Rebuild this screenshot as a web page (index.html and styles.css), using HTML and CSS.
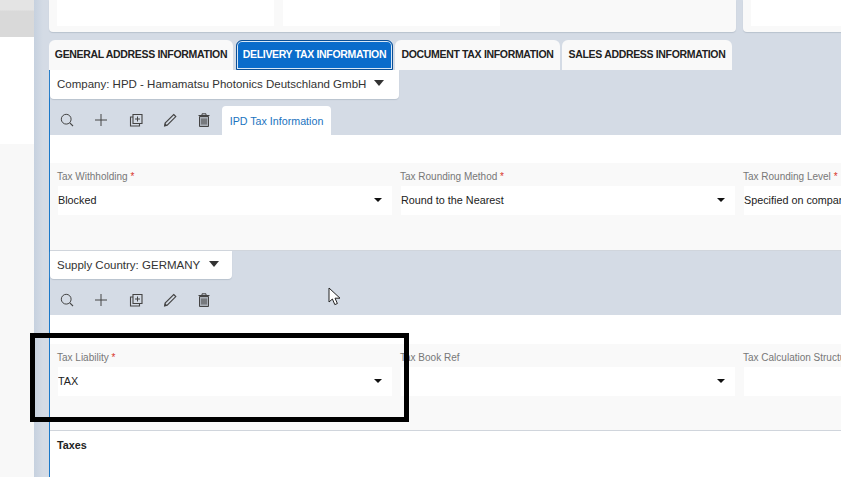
FILE: index.html
```html
<!DOCTYPE html>
<html lang="en">
<head>
<meta charset="utf-8">
<title>Delivery Tax Information</title>
<link rel="stylesheet" href="styles.css">
</head>
<body>
<svg class="defs" width="0" height="0" aria-hidden="true">
  <defs>
    <symbol id="i-search" viewBox="0 0 16 16"><circle cx="7.2" cy="7.2" r="4.9" fill="none" stroke="#444" stroke-width="1"/><path d="M10.8 10.8 14 14" fill="none" stroke="#444" stroke-width="1.1"/></symbol>
    <symbol id="i-plus" viewBox="0 0 16 16"><path d="M8 2v12M2 8h12" fill="none" stroke="#444" stroke-width="1"/></symbol>
    <symbol id="i-copy" viewBox="0 0 16 16"><path d="M5 2.5h9v9H5z" fill="none" stroke="#444" stroke-width="1.1"/><path d="M5 5H2.5v9h9v-2.5" fill="none" stroke="#444" stroke-width="1.1"/><path d="M9.5 4.5v5M7 7h5" fill="none" stroke="#444" stroke-width="1"/></symbol>
    <symbol id="i-edit" viewBox="0 0 16 16"><path d="M11.7 2.5 13.8 4.6 5.2 13.2 2.6 13.9 3.1 11Z" fill="none" stroke="#444" stroke-width="1.1"/><path d="M3.1 11 5.2 13.2 2.3 14Z" fill="#444"/></symbol>
    <symbol id="i-trash" viewBox="0 0 16 16"><path d="M3.5 4.5v10h9v-10Z" fill="#aab0b8" stroke="#444" stroke-width="1"/><path d="M2.5 3.5h11M6 3.2V1.8h4v1.4M6 6.5v6M8 6.5v6M10 6.5v6" fill="none" stroke="#444" stroke-width="1"/></symbol>
  </defs>
</svg>
<div class="page">
  <aside class="side">
    <div class="side-head"></div>
    <div class="side-white"></div>
    <div class="side-rest"></div>
  </aside>
  <div class="rail"></div>
  <main class="main">
    <div class="cards">
      <div class="card card-wide">
        <div class="slot"></div>
        <div class="slot"></div>
      </div>
      <div class="card card-rest">
        <div class="slot slot-grow"></div>
      </div>
    </div>
    <nav class="tabs">
      <div class="tab tab-1">GENERAL ADDRESS INFORMATION</div>
      <div class="tab tab-active">DELIVERY TAX INFORMATION</div>
      <div class="tab tab-3">DOCUMENT TAX INFORMATION</div>
      <div class="tab tab-4">SALES ADDRESS INFORMATION</div>
    </nav>
    <div class="panel">
      <section class="band">
        <div class="drop drop-company">
          <span>Company: HPD - Hamamatsu Photonics Deutschland GmbH</span>
          <i class="caret caret-lg"></i>
        </div>
        <div class="toolbar">
          <svg class="icon"><use href="#i-search"/></svg>
          <svg class="icon"><use href="#i-plus"/></svg>
          <svg class="icon"><use href="#i-copy"/></svg>
          <svg class="icon"><use href="#i-edit"/></svg>
          <svg class="icon"><use href="#i-trash"/></svg>
          <div class="subtab">IPD Tax Information</div>
        </div>
      </section>
      <div class="spacer"></div>
      <section class="form">
        <div class="field">
          <div class="label">Tax Withholding <b>*</b></div>
          <div class="select"><span>Blocked</span><i class="caret"></i></div>
        </div>
        <div class="field">
          <div class="label">Tax Rounding Method <b>*</b></div>
          <div class="select"><span>Round to the Nearest</span><i class="caret"></i></div>
        </div>
        <div class="field">
          <div class="label">Tax Rounding Level <b>*</b></div>
          <div class="select"><span>Specified on company</span><i class="caret"></i></div>
        </div>
      </section>
      <section class="band band-short">
        <div class="drop drop-country">
          <span>Supply Country: GERMANY</span>
          <i class="caret caret-lg"></i>
        </div>
        <div class="toolbar">
          <svg class="icon"><use href="#i-search"/></svg>
          <svg class="icon"><use href="#i-plus"/></svg>
          <svg class="icon"><use href="#i-copy"/></svg>
          <svg class="icon"><use href="#i-edit"/></svg>
          <svg class="icon"><use href="#i-trash"/></svg>
        </div>
      </section>
      <div class="spacer spacer-tall"></div>
      <section class="form form-short">
        <div class="field">
          <div class="label">Tax Liability <b>*</b></div>
          <div class="select"><span>TAX</span><i class="caret"></i></div>
        </div>
        <div class="field">
          <div class="label">Tax Book Ref</div>
          <div class="select"><span></span><i class="caret"></i></div>
        </div>
        <div class="field">
          <div class="label">Tax Calculation Structure</div>
          <div class="select"><span></span></div>
        </div>
      </section>
      <h2 class="taxes">Taxes</h2>
    </div>
  </main>
</div>
<div class="callout"></div>
<svg class="cursor" width="14" height="20" viewBox="0 0 14 20" aria-hidden="true"><path d="M1 1v14l3.4-3 2.4 5.6 2.6-1.1-2.4-5.3H12Z" fill="#fff" stroke="#222" stroke-width="1"/></svg>
</body>
</html>
```
FILE: styles.css
```css
* { box-sizing: border-box; }
html, body { margin: 0; height: 100%; overflow: hidden; background: #fff; }
body { position: relative; font-family: "Liberation Sans", Arial, sans-serif; color: #222; }
.defs { position: absolute; }
.page { display: flex; width: 841px; height: 477px; overflow: hidden; }

.side { width: 34px; flex: none; display: flex; flex-direction: column; }
.side-head { height: 37px; background: linear-gradient(#e4e4e4 0, #e4e4e4 10px, #d9d9d9 11px); }
.side-white { height: 107px; background: #fff; }
.side-rest { flex: 1; background: #f8f8f8; }

.rail { width: 15px; flex: none; background: linear-gradient(90deg, #c6d1df, #d4dbe5 60%); }

.main { flex: 1; min-width: 0; background: #d4dbe5; display: flex; flex-direction: column; }

.cards { display: flex; gap: 7px; height: 32px; flex: none; }
.card { background: #f9f9f9; border-radius: 0 0 4px 4px; box-shadow: 0 1px 1px #b9c2ce; display: flex; gap: 9px; padding: 0 8px; }
.card-wide { width: 687px; flex: none; }
.card-rest { flex: 1; }
.slot { width: 217px; height: 26px; background: #fff; }
.slot-grow { flex: 1; }

.tabs { display: flex; gap: 2px; margin-top: 8px; height: 30px; flex: none; }
.tab { background: #f9f9f9; border-radius: 6px 6px 0 0; font-size: 10.5px; font-weight: 700; letter-spacing: -0.33px; color: #222; display: flex; align-items: center; justify-content: center; white-space: nowrap; padding-bottom: 2px; }
.tab-1 { width: 184px; margin-right: 1px; }
.tab-3 { width: 165px; }
.tab-4 { width: 170px; }
.tab-active { width: 157px; background: #0a6ccb; color: #fff; border: 1px solid #0b4f96; box-shadow: inset 0 0 0 1px #d8e8f7; }

.panel { flex: 1; border-left: 1px solid #1a78c9; background: #fff; min-height: 0; }

.band { background: #d4dbe5; height: 65px; display: flex; flex-direction: column; align-items: flex-start; }
.band-short { height: 64px; }
.drop { height: 29px; flex: none; background: #fff; border-radius: 0 0 4px 4px; box-shadow: 0 1px 1px #b9c2ce; display: flex; align-items: center; padding: 0 0 1px 7px; font-size: 11.5px; color: #333; white-space: nowrap; }
.drop-company { width: 349px; }
.drop-country { width: 182px; height: 28px; }
.caret { display: block; width: 0; height: 0; border-left: 4.5px solid transparent; border-right: 4.5px solid transparent; border-top: 4.5px solid #111; margin-left: auto; margin-right: 10px; }
.caret-lg { border-left-width: 5.5px; border-right-width: 5.5px; border-top: 6px solid #333; margin: -2px 0 0 9px; }
.drop-company .caret-lg { margin-left: 8px; }

.toolbar { display: flex; align-items: center; height: 29px; flex: none; margin-top: 7px; padding-left: 9px; width: 100%; }
.icon { width: 16px; height: 16px; flex: none; margin: -2px 18.25px 0 0; }
.icon:last-of-type { margin-right: 10px; }
.subtab { background: #fff; border-radius: 4px 4px 0 0; height: 29px; width: 109px; display: flex; align-items: center; justify-content: center; font-size: 10.7px; color: #1a73c0; white-space: nowrap; }

.spacer { height: 28px; background: #fff; }
.spacer-tall { height: 29px; }
.form { height: 88px; background: #f9f9f9; border-bottom: 1px solid #d0d5dc; display: grid; grid-template-columns: repeat(3, 334px); column-gap: 9px; padding: 8px 0 0 8px; overflow: hidden; }
.form-short { height: 87px; }
.label { font-size: 10px; color: #777; margin: 0 0 4px -1px; height: 11px; line-height: 11px; white-space: nowrap; }
.label b { color: #d8352a; font-weight: 400; }
.select { height: 29px; background: #fff; display: flex; align-items: center; padding-bottom: 2px; font-size: 10.8px; color: #222; white-space: nowrap; overflow: hidden; }

.taxes { margin: 8px 0 0 7px; font-size: 10.8px; font-weight: 700; color: #222; }

.callout { position: absolute; left: 30px; top: 333px; width: 379px; height: 89px; border: 5px solid #000; }
.cursor { position: absolute; left: 328px; top: 287px; }
```
